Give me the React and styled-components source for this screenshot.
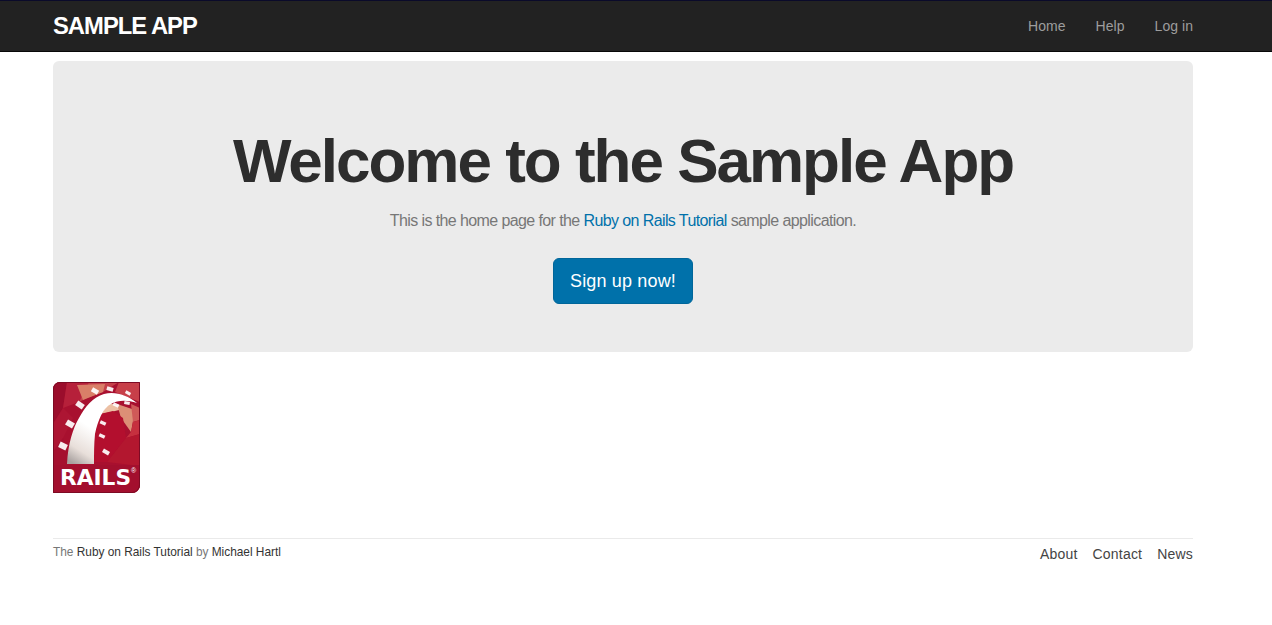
import React from 'react';
import styled, { createGlobalStyle } from 'styled-components';

const GlobalStyle = createGlobalStyle`
  html, body {
    margin: 0;
    padding: 0;
    background: #fff;
  }
  body {
    font-family: "Liberation Sans", Arial, sans-serif;
    color: #333;
  }
`;

const Header = styled.header`
  box-sizing: border-box;
  height: 52px;
  background: #222;
  border-top: 1px solid #0a0a2a;
  border-bottom: 1px solid #080808;
`;
const Container = styled.div`
  box-sizing: border-box;
  width: 1272px;
  padding: 0 79px 0 53px;
`;
const HeaderRow = styled(Container)`
  height: 50px;
  display: flex;
  align-items: center;
  justify-content: space-between;
`;
const Logo = styled.a`
  font-size: 23.8px;
  font-weight: 700;
  letter-spacing: -1px;
  color: #fff;
  text-transform: uppercase;
`;
const Nav = styled.nav`
  display: flex;
  gap: 30px;
`;
const NavLink = styled.a`
  font-size: 14px;
  letter-spacing: 0.05px;
  color: #9d9d9d;
`;
const Hero = styled.section`
  box-sizing: border-box;
  height: 291px;
  margin-top: 9px;
  padding-top: 62px;
  background: #ebebeb;
  border-radius: 6px;
  text-align: center;
`;
const Title = styled.h1`
  margin: 0;
  font-size: 62px;
  line-height: 76px;
  font-weight: 700;
  letter-spacing: -2px;
  color: #2d2d2d;
`;
const Lead = styled.p`
  margin: 10px 0 0;
  font-size: 16px;
  line-height: 24px;
  letter-spacing: -0.6px;
  color: #777;
`;
const TutorialLink = styled.a`
  color: #0071aa;
`;
const SignUp = styled.a`
  box-sizing: border-box;
  display: inline-block;
  width: 140px;
  height: 46px;
  margin-top: 25px;
  line-height: 44px;
  font-size: 18px;
  letter-spacing: 0.15px;
  color: #fff;
  background: #0071aa;
  border: 1px solid #00669a;
  border-radius: 6px;
`;
const RailsLink = styled.a`
  display: block;
  width: 87px;
  height: 111px;
  margin-top: 30px;
`;
const Footer = styled.footer`
  display: flex;
  justify-content: space-between;
  align-items: flex-start;
  margin-top: 45px;
  padding-top: 5px;
  border-top: 1px solid #eaeaea;
`;
const Credit = styled.small`
  font-size: 11.9px;
  line-height: 17px;
  letter-spacing: -0.02px;
  color: #777;
`;
const CreditLink = styled.a`
  color: #333;
`;
const FooterNav = styled.nav`
  display: flex;
  gap: 15px;
`;
const FooterLink = styled.a`
  font-size: 14px;
  line-height: 20px;
  letter-spacing: 0.2px;
  color: #444;
`;

const ties = [
  [10, 64, 25, 8, 6], [17, 42, 30, 8, 6], [27, 23, 35, 8, 5.5], [42, 9, 30, 7, 4.5], [57, 7, 15, 6.5, 4], [75, 11, 30, 5.5, 3],
  [50, 41, 25, 6, 3.5], [49, 54, 25, 6, 3.5], [53, 70, 30, 7, 4], [63, 23, 25, 6, 3.5], [74, 21, 10, 5.5, 3],
];

const facets = [
  ['#9b0d2c', '0,0 14,0 10,26 0,42'],
  ['#b6203a', '14,0 36,0 26,20 10,26'],
  ['#ad1533', '0,42 10,26 20,36 10,56 0,70'],
  ['#c4404a', '36,0 66,0 50,10 34,16 26,20'],
  ['#d97f68', '24,3 52,2 50,10 30,18'],
  ['#c73f49', '66,0 87,0 87,20 62,10'],
  ['#a5102f', '0,70 10,56 16,70 14,84 0,84'],
  ['#ecc0a4', '56,21 74,26 58,30 48,32'],
  ['#dc8f76', '64,22 82,28 78,50 68,36'],
  ['#cf5a58', '78,22 87,26 87,38 80,40'],
  ['#b30f2e', '47,32 60,29 70,36 73,56 54,80 40,80 42,52'],
  ['#c6303f', '80,40 87,38 87,52 73,56 78,50'],
  ['#b3172f', '73,56 87,52 87,84 54,80'],
];

function RailsBadge() {
  return (
    <svg viewBox="0 0 87 111" width="87" height="111">
      <defs>
        <linearGradient id="track" x1="0.1" y1="1" x2="0.6" y2="0.2">
          <stop offset="0" stopColor="#a9a2a0" />
          <stop offset="0.22" stopColor="#e8dfda" />
          <stop offset="0.6" stopColor="#ffffff" />
        </linearGradient>
        <clipPath id="badge">
          <path d="M7 0H87V103a8 8 0 0 1-8 8H0V7a7 7 0 0 1 7-7Z" />
        </clipPath>
      </defs>
      <g clipPath="url(#badge)">
        <rect width="87" height="111" fill="#a8102f" />
        {facets.map(([color, points]) => (
          <polygon key={points} fill={color} points={points} />
        ))}
        <path d="M14 82C15 62 20 46 26 36C32 25 40 15 51 12C62 9 74 13 84 21C74 18 65 18 58 22C50 26 45 38 42 52C41 62 41 72 41 82Z" fill="url(#track)" />
        {ties.map(([x, y, angle, w, h]) => (
          <rect key={`${x}-${y}`} x={x - w / 2} y={y - h / 2} width={w} height={h} fill="#fff" opacity="0.92" transform={`rotate(${angle} ${x} ${y})`} />
        ))}
        <rect y="83" width="87" height="28" fill="#a30f2e" />
        <text x="7" y="103" fontFamily="DejaVu Sans, sans-serif" fontWeight="700" fontSize="20.5" textLength="71" lengthAdjust="spacingAndGlyphs" fill="#fff">RAILS</text>
        <text x="78" y="91" fontFamily="Liberation Sans, sans-serif" fontSize="7" fill="#fff">®</text>
      </g>
      <path d="M7 .5H86.5V103a7.5 7.5 0 0 1-7.5 7.5H.5V7A6.5 6.5 0 0 1 7 .5Z" fill="none" stroke="#7d0a24" />
    </svg>
  );
}

export default function App() {
  return (
    <>
      <GlobalStyle />
      <Header>
        <HeaderRow>
          <Logo>Sample App</Logo>
          <Nav>
            <NavLink>Home</NavLink>
            <NavLink>Help</NavLink>
            <NavLink>Log in</NavLink>
          </Nav>
        </HeaderRow>
      </Header>
      <Container>
        <Hero>
          <Title>Welcome to the Sample App</Title>
          <Lead>
            This is the home page for the <TutorialLink>Ruby on Rails Tutorial</TutorialLink> sample application.
          </Lead>
          <SignUp>Sign up now!</SignUp>
        </Hero>
        <RailsLink>
          <RailsBadge />
        </RailsLink>
        <Footer>
          <Credit>
            The <CreditLink>Ruby on Rails Tutorial</CreditLink> by <CreditLink>Michael Hartl</CreditLink>
          </Credit>
          <FooterNav>
            <FooterLink>About</FooterLink>
            <FooterLink>Contact</FooterLink>
            <FooterLink>News</FooterLink>
          </FooterNav>
        </Footer>
      </Container>
    </>
  );
}
